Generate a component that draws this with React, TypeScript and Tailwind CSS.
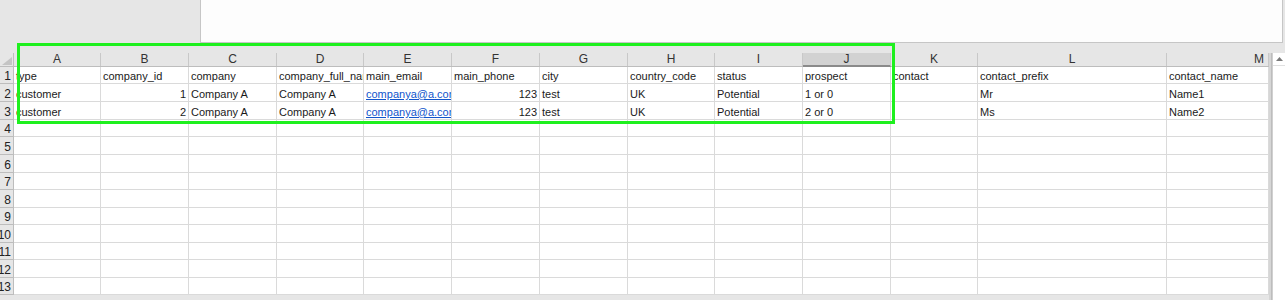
import React from "react";

const W = [
  "w-[87px]",
  "w-[88px]",
  "w-[88px]",
  "w-[87px]",
  "w-[88px]",
  "w-[88px]",
  "w-[88px]",
  "w-[87px]",
  "w-[88px]",
  "w-[88px]",
  "w-[87px]",
  "w-[189px]",
  "w-[102px]",
];
const LETTERS = ["A", "B", "C", "D", "E", "F", "G", "H", "I", "J", "K", "L", "M"];
const HEIGHTS = [
  "h-[17px]",
  "h-[18px]",
  "h-[18px]",
  "h-[17px]",
  "h-[18px]",
  "h-[18px]",
  "h-[17px]",
  "h-[18px]",
  "h-[17px]",
  "h-[18px]",
  "h-[17px]",
  "h-[18px]",
  "h-[17px]",
];

type Cell = { t: string; r?: boolean; link?: boolean } | null;

const DATA: Cell[][] = [
  [
    { t: "type" },
    { t: "company_id" },
    { t: "company" },
    { t: "company_full_name" },
    { t: "main_email" },
    { t: "main_phone" },
    { t: "city" },
    { t: "country_code" },
    { t: "status" },
    { t: "prospect" },
    { t: "contact" },
    { t: "contact_prefix" },
    { t: "contact_name" },
  ],
  [
    { t: "customer" },
    { t: "1", r: true },
    { t: "Company A" },
    { t: "Company A" },
    { t: "companya@a.com", link: true },
    { t: "123", r: true },
    { t: "test" },
    { t: "UK" },
    { t: "Potential" },
    { t: "1 or 0" },
    null,
    { t: "Mr" },
    { t: "Name1" },
  ],
  [
    { t: "customer" },
    { t: "2", r: true },
    { t: "Company A" },
    { t: "Company A" },
    { t: "companya@a.com", link: true },
    { t: "123", r: true },
    { t: "test" },
    { t: "UK" },
    { t: "Potential" },
    { t: "2 or 0" },
    null,
    { t: "Ms" },
    { t: "Name2" },
  ],
];

export default function App() {
  return (
    <div
      className="relative w-[1285px] h-[300px] overflow-hidden bg-[#e6e6e6] text-[11px] text-[#1a1a1a]"
      style={{ fontFamily: '"Liberation Sans", Arial, sans-serif' }}
    >
      {/* top area */}
      <div className="flex h-[43px]">
        <div className="w-[200px] bg-[#e6e6e6]" />
        <div className="w-[1083px] bg-[#fdfdfd] border-l border-b border-r border-[#c6c6c6]" />
      </div>
      <div className="h-[10px]" />

      <div className="flex">
        <div className="flex flex-col">
          {/* column header row */}
          <div className="flex h-[14px] border-b border-[#bdbdbd]">
            <div className="w-[14px] relative border-r border-[#bdbdbd]">
              <svg className="absolute left-[2px] top-[4px]" width="10" height="8" viewBox="0 0 10 8">
                <polygon points="10,0 10,8 0,8" fill="#c4c4c4" />
              </svg>
            </div>
            {LETTERS.map((l, i) => (
              <div
                key={l}
                className={`${W[i]} shrink-0 border-r border-[#c8c8c8] flex items-center leading-[13px] text-[12px] text-[#333] ${
                  i === 12 ? "justify-end pr-[4px]" : "justify-center"
                } ${i === 9 ? "bg-[#d2d2d2] border-b-2 border-b-[#8a8a8a] -mb-[1px]" : ""}`}
              >
                {l}
              </div>
            ))}
          </div>

          {/* body rows */}
          {HEIGHTS.map((h, ri) => (
            <div key={ri} className={`flex ${h}`}>
              <div className="w-[14px] shrink-0 bg-[#e6e6e6] border-r border-b border-[#bdbdbd] flex items-end justify-end pr-[2px] overflow-hidden text-[12px] leading-[14px] text-[#222] whitespace-nowrap">
                {ri + 1}
              </div>
              {W.map((w, ci) => {
                const c = DATA[ri] ? DATA[ri][ci] : null;
                return (
                  <div
                    key={ci}
                    className={`${w} shrink-0 bg-white border-r border-b border-[#dadada] flex items-end leading-[13px] overflow-hidden whitespace-nowrap px-[2px] ${
                      c && c.r ? "justify-end" : "justify-start"
                    }`}
                  >
                    {c ? (
                      c.link ? (
                        <span className="text-[#1155cc] underline">{c.t}</span>
                      ) : (
                        <span>{c.t}</span>
                      )
                    ) : null}
                  </div>
                );
              })}
            </div>
          ))}
        </div>

        {/* split bar + scrollbar */}
        <div className="w-[3px] h-[260px] bg-[#d6d6d6] border-r border-[#bdbdbd]" />
        <div className="w-[13px] bg-white border-l border-[#d0d0d0] h-[260px]">
          <div className="h-[13px] flex items-center justify-center border-b border-[#e0e0e0]">
            <svg width="7" height="4" viewBox="0 0 7 4">
              <polygon points="3.5,0 7,4 0,4" fill="#7a7a7a" />
            </svg>
          </div>
        </div>
      </div>

      {/* green highlight box */}
      <div className="absolute left-[17px] top-[43px] w-[878px] h-[81px] border-[3px] border-[#1ef01e]" />
    </div>
  );
}
